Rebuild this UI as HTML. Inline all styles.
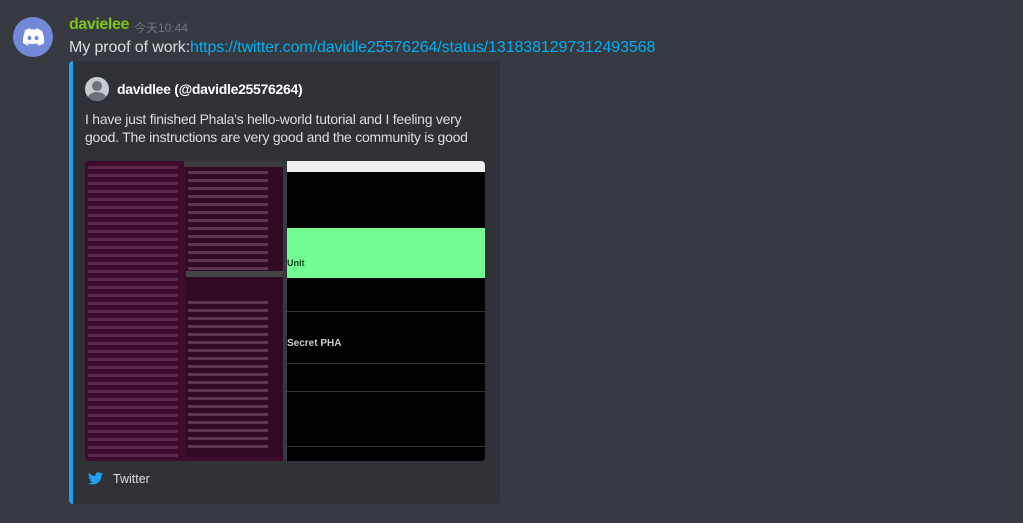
<!DOCTYPE html>
<html><head><meta charset="utf-8"><style>
body{margin:0;width:1023px;height:523px;background:#36393f;font-family:"Liberation Sans","Noto Sans CJK SC",sans-serif;position:relative;overflow:hidden}
.abs{position:absolute}
.term div{height:3px;margin:5px 3px;background:#7a4a6a;opacity:.5;width:90px}
</style></head><body>
<div class="abs" style="left:13px;top:17px;width:40px;height:40px;border-radius:50%;background:#7289da">
<svg width="40" height="40" viewBox="0 0 40 40"><path d="M11 14c3-2 6-2.6 6-2.6l.6 1.2c1.6-.3 3.2-.3 4.8 0l.6-1.2s3 .6 6 2.6c1.4 3 2.5 7 2.2 12-2 1.5-4.5 2.4-6 2.6l-1.2-1.8c1-.3 1.8-.8 2.4-1.2-4.6 2-9.8 2-14.4 0 .6.4 1.4.9 2.4 1.2L16 28.6c-1.5-.2-4-1.1-6-2.6-.3-5 .8-9 2.2-12z" fill="#fff"/><ellipse cx="16.5" cy="21" rx="2" ry="2.2" fill="#7289da"/><ellipse cx="23.5" cy="21" rx="2" ry="2.2" fill="#7289da"/></svg></div>
<div class="abs" style="left:69px;top:16px;font-size:16px;color:#7fc41b;font-weight:bold;letter-spacing:-0.4px">davielee</div>
<div class="abs" style="left:134px;top:19px;font-size:12px;color:#72767d">今天10:44</div>
<div class="abs" style="left:69px;top:39px;font-size:16px;color:#dcddde;white-space:nowrap;letter-spacing:-0.1px">My proof of work:<span style="color:#00b0f4">https://twitter.com/davidle25576264/status/1318381297312493568</span></div>
<div class="abs" style="left:69px;top:61px;width:431px;height:443px;background:#2f3136;border-left:4px solid #1da1f2;border-radius:4px;box-sizing:border-box"></div>
<div class="abs" style="left:85px;top:77px;width:24px;height:24px;border-radius:50%;background:#c8ccd0;overflow:hidden"><div class="abs" style="left:7px;top:4px;width:10px;height:10px;border-radius:50%;background:#6b7279"></div><div class="abs" style="left:3px;top:15px;width:18px;height:12px;border-radius:50%;background:#6b7279"></div></div>
<div class="abs" style="left:117px;top:81px;font-size:14px;color:#fff;font-weight:bold;letter-spacing:-0.3px">davidlee (@davidle25576264)</div>
<div class="abs" style="left:85px;top:110px;width:420px;font-size:14px;line-height:18px;color:#dcddde;white-space:nowrap;letter-spacing:-0.25px">I have just finished Phala's hello-world tutorial and I feeling very<br>good. The instructions are very good and the community is good</div>
<div class="abs" style="left:85px;top:161px;width:400px;height:300px;border-radius:4px;overflow:hidden;background:#000">
 <div class="abs term" style="left:0;top:0;width:198px;height:300px;background:#3d0b2c">
  <div></div><div></div><div></div><div></div><div></div><div></div><div></div><div></div><div></div><div></div><div></div><div></div><div></div><div></div><div></div><div></div><div></div><div></div><div></div><div></div><div></div><div></div><div></div><div></div><div></div><div></div><div></div><div></div><div></div><div></div><div></div><div></div><div></div><div></div><div></div><div></div><div></div>
 </div>
 <div class="abs" style="left:101px;top:6px;width:97px;height:290px;background:#2f0a22"></div>
 <div class="abs" style="left:99px;top:0;width:99px;height:6px;background:#3a3a3a"></div>
 <div class="abs" style="left:103px;top:10px;width:80px;height:3px;background:#8a6080;opacity:.5;box-shadow:0 8px 0 #8a6080,0 16px 0 #8a6080,0 24px 0 #8a6080,0 32px 0 #8a6080,0 40px 0 #8a6080,0 48px 0 #8a6080,0 56px 0 #8a6080,0 64px 0 #8a6080,0 72px 0 #8a6080,0 80px 0 #8a6080,0 88px 0 #8a6080,0 96px 0 #8a6080,0 130px 0 #8a6080,0 138px 0 #8a6080,0 146px 0 #8a6080,0 154px 0 #8a6080,0 162px 0 #8a6080,0 170px 0 #8a6080,0 178px 0 #8a6080,0 186px 0 #8a6080,0 194px 0 #8a6080,0 202px 0 #8a6080,0 210px 0 #8a6080,0 218px 0 #8a6080,0 226px 0 #8a6080,0 234px 0 #8a6080,0 242px 0 #8a6080,0 250px 0 #8a6080,0 258px 0 #8a6080,0 266px 0 #8a6080,0 274px 0 #8a6080"></div>
 <div class="abs" style="left:101px;top:110px;width:97px;height:6px;background:#444"></div>
 <div class="abs" style="left:198px;top:0;width:4px;height:300px;background:#36393f"></div>
 <div class="abs" style="left:202px;top:0;width:198px;height:11px;background:#f0f0f0"></div>
 <div class="abs" style="left:202px;top:67px;width:198px;height:50px;background:#72fb91"></div>
 <div class="abs" style="left:202px;top:97px;font-size:9px;font-weight:bold;color:#0a4a1a">Unit</div>
 <div class="abs" style="left:202px;top:177px;font-size:10px;font-weight:bold;color:#ccc">Secret PHA</div>
 <div class="abs" style="left:202px;top:150px;width:198px;height:1px;background:#333"></div>
 <div class="abs" style="left:202px;top:202px;width:198px;height:1px;background:#333"></div>
 <div class="abs" style="left:202px;top:230px;width:198px;height:1px;background:#333"></div>
 <div class="abs" style="left:202px;top:285px;width:198px;height:1px;background:#333"></div>
</div>
<svg class="abs" style="left:88px;top:472px" width="15" height="13" viewBox="0 0 24 20"><path d="M24 2.4c-.9.4-1.8.6-2.8.8 1-.6 1.8-1.6 2.2-2.7-1 .6-2 1-3.1 1.2C19.3.7 18 0 16.6 0c-2.7 0-4.9 2.2-4.9 4.9 0 .4 0 .8.1 1.1C7.7 5.8 4.1 3.900 1.7.9c-.4.7-.7 1.6-.7 2.5 0 1.7.9 3.2 2.2 4.1-.8 0-1.600-.2-2.2-.6v.1c0 2.4 1.7 4.4 3.9 4.8-.4.1-.8.2-1.3.2-.3 0-.6 0-.9-.1.6 2 2.4 3.4 4.6 3.4-1.7 1.300-3.8 2.1-6.1 2.1H0c2.2 1.4 4.8 2.2 7.5 2.2 9.1 0 14-7.5 14-14v-.6c1-.7 1.8-1.6 2.5-2.6z" fill="#1da1f2"/></svg>
<div class="abs" style="left:113px;top:472px;font-size:12.5px;color:#dcddde">Twitter</div>
</body></html>
